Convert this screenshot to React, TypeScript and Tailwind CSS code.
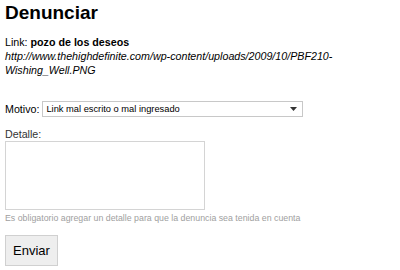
import React from 'react';

const App: React.FC = () => {
  return (
    <div className="min-h-screen bg-white px-[5px] pt-[1px] text-[10.7px] text-black" style={{ fontFamily: '"Liberation Sans", Arial, sans-serif' }}>
      <h1 className="text-[19px] font-bold leading-[24px]">Denunciar</h1>
      <div className="mt-[10px] leading-[14px]">
        Link: <span className="font-bold">pozo de los deseos</span>
      </div>
      <div className="italic leading-[14px]">
        http://www.thehighdefinite.com/wp-content/uploads/2009/10/PBF210-
        <br />
        Wishing_Well.PNG
      </div>
      <div className="mt-[24px] flex items-center gap-[3px]">
        <span className="leading-[14px]">Motivo:</span>
        <div className="flex h-[16px] w-[261px] items-center justify-between border border-[#c8c8c8] bg-white pl-[3px] pr-[5px] text-[9.3px] leading-[12px]">
          <span>Link mal escrito o mal ingresado</span>
          <svg width="7" height="4" viewBox="0 0 7 4">
            <path d="M0 0h7L3.5 4z" fill="#333" />
          </svg>
        </div>
      </div>
      <div className="mt-[10px] leading-[14px] text-[#333]">Detalle:</div>
      <div className="h-[69px] w-[200px] border border-[#d4d4d4] bg-white" />
      <div className="mt-[2px] text-[8.8px] leading-[12px] text-[#a0a0a0]">
        Es obligatorio agregar un detalle para que la denuncia sea tenida en cuenta
      </div>
      <button className="mt-[11px] h-[31px] w-[53px] border border-[#d0d0d0] bg-[#eeeeee] text-[13px] text-black">
        Enviar
      </button>
    </div>
  );
};

export default App;
